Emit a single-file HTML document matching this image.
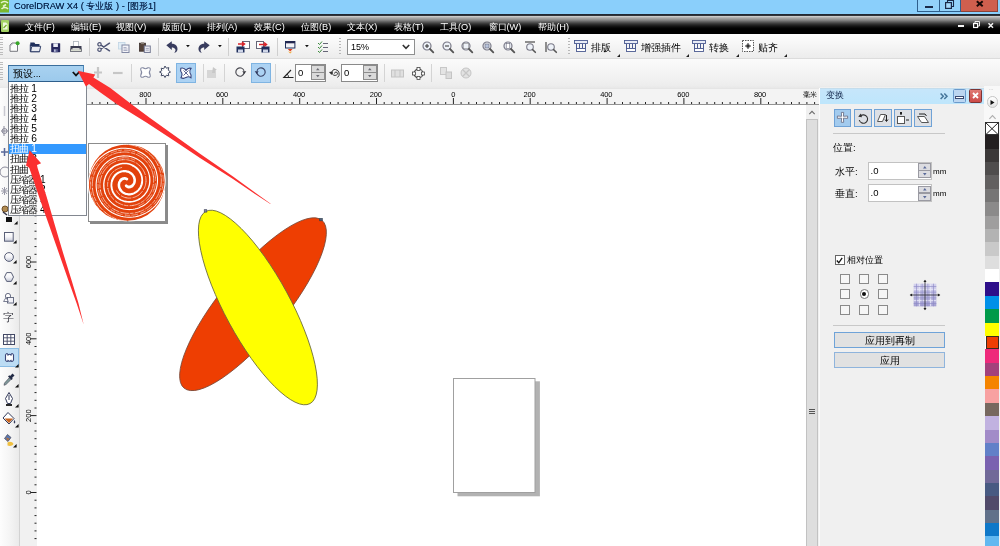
<!DOCTYPE html>
<html>
<head>
<meta charset="utf-8">
<title>CorelDRAW X4</title>
<style>
*{box-sizing:border-box;margin:0;padding:0}
html,body{width:1000px;height:546px;overflow:hidden;background:#fff}
body{position:relative;font-family:"Liberation Sans",sans-serif;font-size:9px;color:#000;-webkit-font-smoothing:antialiased}
.abs{will-change:transform}
.abs,.abs *{position:absolute}
i{display:block}
span{white-space:nowrap}
svg{overflow:visible}
#title{left:0;top:0;width:1000px;height:14px;background:#8acffb;overflow:hidden}
#title .t{left:14px;top:0;font-size:9.3px;line-height:13px;color:#07224a;text-shadow:0 0 .5px rgba(7,34,74,.7)}
#menu{left:0;top:13.5px;width:1000px;height:20.5px;background:linear-gradient(#232c3a 0,#1e2228 1.4px,#cecece 2.3px,#a8a8a8 4px,#888 6px,#5a5a5a 8px,#323232 10px,#161616 12px,#040404 14px,#000 15px,#000 100%)}
#menu span{top:6px;color:#fff;font-size:9.2px;line-height:14px}
#tb1{left:0;top:34px;width:1000px;height:25px;background:linear-gradient(#fefefe,#f4f4f4 55%,#ececec);border-bottom:1px solid #dcdcdc}
#tb2{left:0;top:59px;width:1000px;height:29px;background:linear-gradient(#fbfbfb,#f3f3f3 55%,#ededed 90%,#e8e8e8)}
.sep{width:1px;height:18px;top:4px;background:#cfcfcf}
.grip{width:3px;height:19px;top:3px;left:0;background:repeating-linear-gradient(#bdbdbd 0 1px,transparent 1px 2.5px)}
#hruler{left:19px;top:88px;width:799.5px;height:17px;background:linear-gradient(#dedede 0,#f3f3f3 1.5px,#f3f3f3 100%);border-bottom:1px solid #929292}
#toolbox{left:0;top:88px;width:19.5px;height:458px;background:linear-gradient(90deg,#fdfdfd,#f5f5f5 50%,#eaeaea);border-right:1px solid #d2d2d2}
#vruler{left:19.5px;top:105px;width:17.5px;height:441px;background:#f1f1f1;border-right:1px solid #9a9a9a}
#canvas{left:37px;top:105px;width:769px;height:441px;background:#fff}
#vscroll{left:805.5px;top:105px;width:15.5px;height:441px;background:#fafafa}
#docker{left:820px;top:87px;width:164px;height:459px;background:#f0f0f0}
#palette{left:984px;top:86px;width:16px;height:460px;background:#f0f0f0}
.lbl{font-size:9px;line-height:11px;color:#000}
</style>
</head>
<body>
<div id="title" class="abs"><span class="t">CorelDRAW X4 ( 专业版 ) - [图形1]</span><svg style="left:0px;top:0px" width="9" height="13" viewBox="0 0 9 13"><rect width="9" height="12.5" fill="#7ab82e"/><path d="M1 3c2-2 5-2 7 0M1.5 9c2-2 5-2 6.5 0M3 6.5l3-2" stroke="#e8f4d0" stroke-width="1.6" fill="none"/></svg><i style="left:916.5px;top:-1px;width:23.5px;height:13px;background:#93d2fa;border:1px solid #2f5f8c"></i><i style="left:925px;top:6px;width:8px;height:2.4px;background:#1a2a48"></i><i style="left:939px;top:-1px;width:21.5px;height:13px;background:#93d2fa;border:1px solid #2f5f8c"></i><svg style="left:944.5px;top:0px" width="9" height="9" viewBox="0 0 9 9"><path d="M2.5 2.5V.5h6v6h-2" fill="none" stroke="#1a2a48" stroke-width="1.1"/><rect x=".6" y="2.6" width="5.8" height="5.8" fill="#a8dafa" stroke="#1a2a48" stroke-width="1.2"/></svg><i style="left:960.5px;top:-1px;width:37.5px;height:13px;background:#cf5f4e;border:1px solid #8a4238;border-left:0"></i><svg style="left:976px;top:1px" width="7.5" height="5.6" viewBox="0 0 7.5 5.6"><path d="M.8 .3l5.9 5M6.7 .3l-5.9 5" stroke="#1a0a08" stroke-width="2"/></svg></div>
<div id="menu" class="abs"><span style="left:25px">文件(F)</span><span style="left:71px">编辑(E)</span><span style="left:116px">视图(V)</span><span style="left:162px">版面(L)</span><span style="left:207px">排列(A)</span><span style="left:254px">效果(C)</span><span style="left:301px">位图(B)</span><span style="left:347px">文本(X)</span><span style="left:394px">表格(T)</span><span style="left:440px">工具(O)</span><span style="left:488.5px">窗口(W)</span><span style="left:538.2px">帮助(H)</span><i style="left:958px;top:11px;width:6px;height:2px;background:#f4f4f4"></i><svg style="left:972.5px;top:6.5px" width="7" height="7" viewBox="0 0 7 7"><path d="M2 2V.5h4.5V5H5" fill="none" stroke="#eee" stroke-width="1"/><rect x=".6" y="2.5" width="4" height="4" fill="none" stroke="#fff" stroke-width="1.2"/></svg><svg style="left:987.5px;top:8.5px" width="5.5" height="5" viewBox="0 0 5.5 5"><path d="M.5 .3l4.5 4.4M5 .3L.5 4.7" stroke="#f4f4f4" stroke-width="1.5"/></svg><svg style="left:1px;top:5.5px" width="8" height="12" viewBox="0 0 8 12"><rect width="8" height="12" rx="1" fill="#a4d264"/><path d="M2 2.5h3l1.5 1.5v5.5h-4.5z" fill="#eef8dc"/><path d="M2.5 8l3-3" stroke="#7ab030" stroke-width="1.2"/></svg></div>
<div id="tb1" class="abs"><i class="grip"></i><svg style="left:8.7px;top:8px" width="10" height="10" viewBox="0 0 10 10"><path d="M3 1h5.5v8.3h-7.5V3z" fill="#fcfcfc" stroke="#77797f" stroke-width="1"/><path d="M1 3h2V1" fill="none" stroke="#9a9ca4" stroke-width=".7"/><circle cx="8.6" cy="1.3" r="2" fill="#37a628"/></svg><svg style="left:29.799999999999997px;top:7.699999999999999px" width="11" height="10" viewBox="0 0 11 10"><path d="M.3 .6h4l1 1.3h4.2v2h-9.2z" fill="#1f2f5c"/><path d="M.3 2.5v7.2h9.3" fill="none" stroke="#1f2f5c" stroke-width="1"/><path d="M1.8 4.3h8.9l-1.2 5.4h-8.9z" fill="#e9ebf1" stroke="#1f2f5c" stroke-width=".9"/></svg><svg style="left:50.8px;top:8.5px" width="9.4" height="9.4" viewBox="0 0 9.4 9.4"><rect x=".2" y=".2" width="9" height="9" rx=".6" fill="#27285e"/><rect x="2.3" y=".4" width="4.6" height="3.6" fill="#eceef8"/><rect x="2.6" y="6" width="4.2" height="3.2" fill="#5a5e90"/><rect x="3.2" y="6.5" width="1.3" height="2.2" fill="#d8dcf0"/></svg><svg style="left:70.2px;top:7.300000000000001px" width="12" height="11" viewBox="0 0 12 11"><rect x="3.5" y=".5" width="5" height="5" fill="#fff" stroke="#a8b0b8" stroke-width=".8"/><rect x=".5" y="5" width="11" height="3.2" fill="#3a3c50"/><rect x=".5" y="8" width="11" height="2.5" fill="#d8dcd0" stroke="#5a5c68" stroke-width=".8"/><rect x="2.5" y="7.2" width="7" height="1.3" fill="#f8f8f0"/></svg><i style="left:89px;top:4px;width:1px;height:18px;background:#cfcfcf"></i><svg style="left:96.8px;top:7.699999999999999px" width="13" height="10" viewBox="0 0 13 10"><path d="M4 3.2L12.5 8.8M4 6.8L12.5 1.2" stroke="#4e5474" stroke-width="1.5" fill="none" stroke-linecap="round"/><circle cx="2.5" cy="2.3" r="1.7" fill="#f4f4f4" stroke="#4e5474" stroke-width="1.2"/><circle cx="2.5" cy="7.7" r="1.7" fill="#f4f4f4" stroke="#4e5474" stroke-width="1.2"/></svg><svg style="left:118.2px;top:7.699999999999999px" width="12" height="11" viewBox="0 0 12 11"><rect x=".5" y=".5" width="6.5" height="6.5" fill="#e2eef6" stroke="#c0d4e4" stroke-width=".8"/><rect x="4" y="3" width="7" height="7.5" fill="#f4f4f8" stroke="#8289a4" stroke-width="1"/><path d="M5.5 5.5h3M5.5 7h4M5.5 8.5h4" stroke="#9aa0b8" stroke-width=".8"/></svg><svg style="left:138.5px;top:7.699999999999999px" width="12" height="11" viewBox="0 0 12 11"><rect x=".5" y="1.2" width="6" height="8" fill="#54433a" stroke="#3a2e2a" stroke-width=".8"/><rect x="2" y=".3" width="3" height="1.8" fill="#8a8078"/><rect x="5.3" y="4" width="6" height="6.5" fill="#e8e8ee" stroke="#7a7f98" stroke-width="1"/><path d="M6.8 6.5h3M6.8 8.2h3" stroke="#9aa0b8" stroke-width=".8"/></svg><i style="left:157.5px;top:4px;width:1px;height:18px;background:#cfcfcf"></i><svg style="left:166px;top:6.699999999999999px" width="12" height="12" viewBox="0 0 12 12"><path d="M.3 4.2L5.8 .3v2.5c3.8 0 6.2 2.6 5.6 6.2c-.4 1.6-1.6 2.6-3.2 2.8c1.3-1.2 1.6-2.5 1-3.7c-.6-1.2-1.8-1.7-3.4-1.7v2.6z" fill="#383c5e"/></svg><svg style="left:185.79999999999998px;top:11.3px" width="3.8" height="2.2" viewBox="0 0 3.8 2.2"><path d="M0 0h3.8L1.9 2.2z" fill="#111"/></svg><svg style="left:198px;top:6.699999999999999px" width="12" height="12" viewBox="0 0 12 12"><g transform="translate(12,0) scale(-1,1)"><path d="M.3 4.2L5.8 .3v2.5c3.8 0 6.2 2.6 5.6 6.2c-.4 1.6-1.6 2.6-3.2 2.8c1.3-1.2 1.6-2.5 1-3.7c-.6-1.2-1.8-1.7-3.4-1.7v2.6z" fill="#383c5e"/></g></svg><svg style="left:217.9px;top:11.3px" width="3.8" height="2.2" viewBox="0 0 3.8 2.2"><path d="M0 0h3.8L1.9 2.2z" fill="#111"/></svg><i style="left:228px;top:4px;width:1px;height:18px;background:#cfcfcf"></i><svg style="left:236px;top:7px" width="14" height="12" viewBox="0 0 14 12"><rect x="6.5" y="0.5" width="7" height="7" fill="#fff" stroke="#667"/><path d="M2 3h6M6 1l2.5 2L6 5" stroke="#d8242a" stroke-width="1.5" fill="none"/><rect x="0.5" y="5.5" width="8" height="6" fill="#1f2f5c"/><rect x="2" y="8.5" width="5" height="3" fill="#cfd6e8"/></svg><svg style="left:256.4px;top:7px" width="14" height="12" viewBox="0 0 14 12"><rect x="0.5" y="0.5" width="7" height="7" fill="#fff" stroke="#667"/><path d="M3 3.5h7M8 1.5l2.5 2L8 5.5" stroke="#d8242a" stroke-width="1.5" fill="none"/><rect x="5.5" y="5.5" width="8" height="6" fill="#1f2f5c"/><rect x="7" y="8.5" width="5" height="3" fill="#cfd6e8"/></svg><i style="left:277px;top:4px;width:1px;height:18px;background:#cfcfcf"></i><svg style="left:285px;top:6.5px" width="10.4" height="13" viewBox="0 0 10.4 13"><rect x=".5" y=".5" width="9.4" height="6.5" fill="#f2f2f6" stroke="#1f2f5c" stroke-width="1"/><rect x=".5" y=".3" width="9.4" height="2" fill="#23264e"/><path d="M2.8 8h4.8l-2.4 2.6z" fill="#e03c18"/><path d="M3 10.3l2.2 2.2 2.2-2.2-2.2 .9z" fill="#f3a427"/></svg><svg style="left:304.70000000000005px;top:11.3px" width="3.8" height="2.2" viewBox="0 0 3.8 2.2"><path d="M0 0h3.8L1.9 2.2z" fill="#111"/></svg><svg style="left:317.2px;top:7px" width="12" height="12" viewBox="0 0 12 12"><path d="M1 2l1.5 1.5L5 .5M1 6l1.5 1.5L5 4.5M1 10l1.5 1.5L5 8.5" stroke="#3c8a3c" stroke-width="1" fill="none"/><path d="M6 2.5h5M6 6.5h5M6 10.5h5" stroke="#667" stroke-width="1.2"/></svg><i style="left:339px;top:4px;width:2px;height:18px;background:repeating-linear-gradient(#b8b8b8 0 1px,transparent 1px 3px)"></i><i style="left:347px;top:4.5px;width:68px;height:16.5px;background:#fff;border:1px solid #8e8f8f"></i><span style="left:351px;top:8px;font-size:9px;line-height:10px">15%</span><svg style="left:402px;top:10px" width="8" height="6" viewBox="0 0 8 6"><path d="M0.8 1l3.2 3.4L7.2 1" stroke="#333" stroke-width="1.6" fill="none"/></svg><svg style="left:422px;top:6.5px" width="12" height="12" viewBox="0 0 12 12"><circle cx="5" cy="5" r="4" fill="#eef2f8" stroke="#7a7a88" stroke-width="1.2"/><path d="M3 5h4M5 3v4" stroke="#333" stroke-width="1"/><path d="M8 8l3.3 3.3" stroke="#555" stroke-width="1.8" stroke-linecap="round"/></svg><svg style="left:442px;top:6.5px" width="12" height="12" viewBox="0 0 12 12"><circle cx="5" cy="5" r="4" fill="#eef2f8" stroke="#7a7a88" stroke-width="1.2"/><path d="M3 5h4" stroke="#333" stroke-width="1"/><path d="M8 8l3.3 3.3" stroke="#555" stroke-width="1.8" stroke-linecap="round"/></svg><svg style="left:461px;top:6.5px" width="12" height="12" viewBox="0 0 12 12"><circle cx="5" cy="5" r="4" fill="#eef2f8" stroke="#7a7a88" stroke-width="1.2"/><rect x="2.5" y="2.5" width="5" height="5" fill="none" stroke="#555" stroke-width=".8" stroke-dasharray="1 1"/><path d="M8 8l3.3 3.3" stroke="#555" stroke-width="1.8" stroke-linecap="round"/></svg><svg style="left:482px;top:6.5px" width="12" height="12" viewBox="0 0 12 12"><circle cx="5" cy="5" r="4" fill="#eef2f8" stroke="#7a7a88" stroke-width="1.2"/><rect x="3" y="3" width="4" height="4" fill="#b8c4dc" stroke="#667" stroke-width=".6"/><path d="M8 8l3.3 3.3" stroke="#555" stroke-width="1.8" stroke-linecap="round"/></svg><svg style="left:503px;top:6.5px" width="12" height="12" viewBox="0 0 12 12"><circle cx="5" cy="5" r="4" fill="#eef2f8" stroke="#7a7a88" stroke-width="1.2"/><rect x="3.2" y="2.5" width="3.6" height="5" fill="#fff" stroke="#667" stroke-width=".6"/><path d="M8 8l3.3 3.3" stroke="#555" stroke-width="1.8" stroke-linecap="round"/></svg><svg style="left:524px;top:7px" width="12" height="12" viewBox="0 0 12 12"><path d="M1 1h10" stroke="#555" stroke-width="1.3"/><circle cx="6" cy="6" r="3.3" fill="#eef2f8" stroke="#7a7a88" stroke-width="1.1"/><path d="M8.5 8.5l2.8 2.8" stroke="#555" stroke-width="1.6" stroke-linecap="round"/></svg><svg style="left:544.5px;top:7px" width="12" height="12" viewBox="0 0 12 12"><path d="M1 1v10" stroke="#555" stroke-width="1.3"/><circle cx="6" cy="6" r="3.3" fill="#eef2f8" stroke="#7a7a88" stroke-width="1.1"/><path d="M8.5 8.5l2.8 2.8" stroke="#555" stroke-width="1.6" stroke-linecap="round"/></svg><i style="left:568px;top:4px;width:2px;height:18px;background:repeating-linear-gradient(#b8b8b8 0 1px,transparent 1px 3px)"></i><svg style="left:574px;top:6px" width="14" height="12" viewBox="0 0 14 12"><rect x="0.5" y="0.5" width="13" height="3" fill="#e8ecf6" stroke="#4a5a90" stroke-width=".9"/><path d="M2.5 4v5h9V4M5.5 4v4.5M8.5 4v4.5" stroke="#4a5a90" stroke-width="1" fill="none"/><rect x="2.5" y="8.5" width="9" height="3" fill="#fff" stroke="#4a5a90" stroke-width=".9"/></svg><span style="left:591px;top:7.5px;font-size:9.5px;line-height:12px">排版</span><svg style="left:617px;top:20px" width="3" height="3" viewBox="0 0 3 3"><path d="M3 0v3H0z" fill="#222"/></svg><svg style="left:623.5px;top:6px" width="14" height="12" viewBox="0 0 14 12"><rect x="0.5" y="0.5" width="13" height="3" fill="#e8ecf6" stroke="#4a5a90" stroke-width=".9"/><path d="M2.5 4v5h9V4M5.5 4v4.5M8.5 4v4.5" stroke="#4a5a90" stroke-width="1" fill="none"/><rect x="2.5" y="8.5" width="9" height="3" fill="#fff" stroke="#4a5a90" stroke-width=".9"/></svg><span style="left:641px;top:7.5px;font-size:9.5px;line-height:12px;">增强插件</span><svg style="left:686px;top:20px" width="3" height="3" viewBox="0 0 3 3"><path d="M3 0v3H0z" fill="#222"/></svg><svg style="left:692px;top:6px" width="14" height="12" viewBox="0 0 14 12"><rect x="0.5" y="0.5" width="13" height="3" fill="#e8ecf6" stroke="#4a5a90" stroke-width=".9"/><path d="M2.5 4v5h9V4M5.5 4v4.5M8.5 4v4.5" stroke="#4a5a90" stroke-width="1" fill="none"/><rect x="2.5" y="8.5" width="9" height="3" fill="#fff" stroke="#4a5a90" stroke-width=".9"/></svg><span style="left:709px;top:7.5px;font-size:9.5px;line-height:12px">转换</span><svg style="left:735.5px;top:20px" width="3" height="3" viewBox="0 0 3 3"><path d="M3 0v3H0z" fill="#222"/></svg><svg style="left:742px;top:6px" width="12" height="12" viewBox="0 0 12 12"><rect x="0.5" y="0.5" width="11" height="11" fill="#fff" stroke="#555" stroke-dasharray="1.5 1"/><path d="M3 6h6M6 3v6" stroke="#333" stroke-width="1"/><rect x="4.5" y="4.5" width="3" height="3" fill="#333"/></svg><span style="left:757.5px;top:7.5px;font-size:9.5px;line-height:12px">贴齐</span><svg style="left:784px;top:20px" width="3" height="3" viewBox="0 0 3 3"><path d="M3 0v3H0z" fill="#222"/></svg></div>
<div id="tb2" class="abs"><i class="grip"></i><i style="left:8px;top:5.8px;width:75.7px;height:17.2px;background:linear-gradient(#a8d1f0,#9ccaec);border:1px solid #4a86b8;border-top-color:#3a6e9c;border-bottom:1.5px solid #2e5f8c"></i><span style="left:13px;top:9px;font-size:9.5px;line-height:11px">预设...</span><svg style="left:72px;top:12px" width="8" height="6" viewBox="0 0 8 6"><path d="M0.8 1l3.2 3.4L7.2 1" stroke="#111" stroke-width="1.8" fill="none"/></svg><svg style="left:93.5px;top:8px" width="8" height="11" viewBox="0 0 8 11"><path d="M4 0v11M0 5.5h8" stroke="#c6c6c6" stroke-width="2.2"/></svg><svg style="left:112.6px;top:8.6px" width="9.6" height="10" viewBox="0 0 9.6 10"><path d="M0 5h9.6" stroke="#c6c6c6" stroke-width="2.2"/></svg><i style="left:131px;top:5px;width:1px;height:18px;background:#d4d4d4"></i><svg style="left:139.5px;top:7.5px" width="11" height="11" viewBox="0 0 11 11"><path d="M3 .8Q5.5 2.6 8 .8Q10.8 .2 10.2 3Q8.4 5.5 10.2 8Q10.8 10.8 8 10.2Q5.5 8.4 3 10.2Q.2 10.8 .8 8Q2.6 5.5 .8 3Q.2 .2 3 .8z" fill="#fff" stroke="#858aa2" stroke-width="1.1"/></svg><svg style="left:159.2px;top:7.4px" width="12" height="12" viewBox="0 0 12 12"><path d="M6 0l1.3 2.2 2.5-.6-.6 2.5L11.5 6 9.2 7.3l.6 2.5-2.5-.6L6 11.5 4.7 9.2l-2.5.6.6-2.5L.5 6l2.3-1.3-.6-2.5 2.5.6z" fill="#fff" stroke="#444c66" stroke-width="1"/></svg><i style="left:176px;top:3.5px;width:20px;height:20px;background:#acd2f3;border:1px solid #7fb4e2"></i><svg style="left:179.8px;top:7.5px" width="12" height="12" viewBox="0 0 12 12"><path d="M.8 1.2C3 .6 4.8 1.5 6 3.4C7.2 1.6 9 .8 11 1.3C9.6 2.8 9.4 4.4 10 6C11.2 7.4 11.6 9 11 10.8C9.4 9.6 7.6 9.6 6 10.4C4.6 11.4 2.8 11.6 1 10.8C2.2 9.2 2.4 7.6 1.8 6C.6 4.6 .3 2.9 .8 1.2z" fill="#fff" stroke="#36427a" stroke-width="1.1"/><path d="M3.5 3.5l5 5M8.5 3.5l-5 5" stroke="#36427a" stroke-width=".8"/></svg><i style="left:203px;top:5px;width:1px;height:18px;background:#d4d4d4"></i><svg style="left:206px;top:8px" width="12" height="12" viewBox="0 0 12 12"><rect x="1" y="3" width="9" height="8" fill="#d6d6d6"/><path d="M7 0l4 3h-2v3H6z" fill="#c8c8c8"/></svg><i style="left:224px;top:5px;width:1px;height:18px;background:#d4d4d4"></i><svg style="left:234.3px;top:7.2px" width="12" height="12" viewBox="0 0 12 12"><path d="M10 4.7A4.2 4.2 0 1 0 10.1 7" fill="none" stroke="#4a4a52" stroke-width="1.15"/><path d="M8.3 5.2h4l-2 2.7z" fill="#33333a"/></svg><i style="left:251px;top:3.5px;width:20px;height:20px;background:#acd2f3;border:1px solid #7fb4e2"></i><svg style="left:255px;top:7.2px" width="12" height="12" viewBox="0 0 12 12"><g transform="translate(12,0) scale(-1,1)"><path d="M10 4.7A4.2 4.2 0 1 0 10.1 7" fill="none" stroke="#3a4468" stroke-width="1.15"/><path d="M8.3 5.2h4l-2 2.7z" fill="#2b3358"/></g></svg><i style="left:275px;top:5px;width:1px;height:18px;background:#d4d4d4"></i><svg style="left:283px;top:10px" width="11" height="9" viewBox="0 0 11 9"><path d="M10.5 8.5H.8L8 1" fill="none" stroke="#222" stroke-width="1.1"/><path d="M5.5 8.5A4 4 0 0 0 4 5" fill="none" stroke="#222" stroke-width=".9"/></svg><i style="left:295px;top:5px;width:31px;height:17.5px;background:#fff;border:1px solid #8a8a8a"></i><span style="left:298px;top:8px;font-size:9.5px;line-height:11px">0</span><i style="left:311px;top:6px;width:14px;height:7.8px;background:#dadada;border:1px solid #8c8c8c"></i><i style="left:311px;top:13.2px;width:14px;height:7.8px;background:#dadada;border:1px solid #8c8c8c"></i><svg style="left:316.2px;top:8.6px" width="3.6" height="2.2" viewBox="0 0 3.6 2.2"><path d="M0 2.2h3.6L1.8 0z" fill="#6a6a72"/></svg><svg style="left:316.2px;top:16px" width="3.6" height="2.2" viewBox="0 0 3.6 2.2"><path d="M0 0h3.6L1.8 2.2z" fill="#6a6a72"/></svg><svg style="left:329px;top:9px" width="11" height="11" viewBox="0 0 11 11"><path d="M5.5 5.5a1.5 1.5 0 1 1 2 1.5a3 3 0 1 1 -1-5.5a4.5 4.5 0 0 1 2 8" fill="none" stroke="#333" stroke-width="1"/><path d="M0 4l2.5 3 1.5-3.5z" fill="#333"/></svg><i style="left:341px;top:5px;width:37px;height:17.5px;background:#fff;border:1px solid #8a8a8a"></i><span style="left:344px;top:8px;font-size:9.5px;line-height:11px">0</span><i style="left:363px;top:6px;width:14px;height:7.8px;background:#dadada;border:1px solid #8c8c8c"></i><i style="left:363px;top:13.2px;width:14px;height:7.8px;background:#dadada;border:1px solid #8c8c8c"></i><svg style="left:368.2px;top:8.6px" width="3.6" height="2.2" viewBox="0 0 3.6 2.2"><path d="M0 2.2h3.6L1.8 0z" fill="#6a6a72"/></svg><svg style="left:368.2px;top:16px" width="3.6" height="2.2" viewBox="0 0 3.6 2.2"><path d="M0 0h3.6L1.8 2.2z" fill="#6a6a72"/></svg><i style="left:384px;top:5px;width:1px;height:18px;background:#d4d4d4"></i><svg style="left:391px;top:9px" width="13" height="10" viewBox="0 0 13 10"><rect x="0.5" y="2" width="12" height="7" fill="#e0e0e0" stroke="#c4c4c4"/><path d="M4 2v7M9 2v7" stroke="#c4c4c4"/></svg><svg style="left:412.3px;top:7.5px" width="13" height="13" viewBox="0 0 13 13"><circle cx="6.5" cy="6.5" r="4.5" fill="none" stroke="#444" stroke-width="1.1"/><rect x="5" y="0.5" width="3" height="3" fill="#fff" stroke="#444" stroke-width=".8"/><rect x="5" y="9.5" width="3" height="3" fill="#fff" stroke="#444" stroke-width=".8"/><rect x="0.5" y="5" width="3" height="3" fill="#fff" stroke="#444" stroke-width=".8"/><rect x="9.5" y="5" width="3" height="3" fill="#fff" stroke="#444" stroke-width=".8"/></svg><i style="left:431px;top:5px;width:1px;height:18px;background:#d4d4d4"></i><svg style="left:439.7px;top:8px" width="12" height="12" viewBox="0 0 12 12"><rect x="0.5" y="0.5" width="6" height="7" fill="#e4e4e4" stroke="#c8c8c8"/><rect x="6" y="5" width="5.5" height="6.5" fill="#dcdcdc" stroke="#c4c4c4"/></svg><svg style="left:460px;top:8px" width="12" height="12" viewBox="0 0 12 12"><circle cx="6" cy="6" r="5" fill="#e2e2e2" stroke="#c6c6c6"/><path d="M2.5 2.5l7 7M9.5 2.5l-7 7" stroke="#c6c6c6" stroke-width="1.2"/></svg></div>
<div id="hruler" class="abs"><svg style="left:0px;top:0px" width="801" height="17" viewBox="0 0 801 17"><path d="M19.4 16v-2M27.1 16v-2M34.8 16v-2M42.5 16v-2M50.1 16v-6M57.8 16v-2M65.5 16v-2M73.2 16v-2M80.9 16v-2M88.6 16v-2M96.3 16v-2M103.9 16v-2M111.6 16v-2M119.3 16v-2M127 16v-6M134.7 16v-2M142.4 16v-2M150.1 16v-2M157.7 16v-2M165.4 16v-2M173.1 16v-2M180.8 16v-2M188.5 16v-2M196.2 16v-2M203.8 16v-6M211.5 16v-2M219.2 16v-2M226.9 16v-2M234.6 16v-2M242.3 16v-2M250 16v-2M257.6 16v-2M265.3 16v-2M273 16v-2M280.7 16v-6M288.4 16v-2M296.1 16v-2M303.8 16v-2M311.4 16v-2M319.1 16v-2M326.8 16v-2M334.5 16v-2M342.2 16v-2M349.9 16v-2M357.5 16v-6M365.2 16v-2M372.9 16v-2M380.6 16v-2M388.3 16v-2M396 16v-2M403.7 16v-2M411.3 16v-2M419 16v-2M426.7 16v-2M434.4 16v-6M442.1 16v-2M449.8 16v-2M457.5 16v-2M465.1 16v-2M472.8 16v-2M480.5 16v-2M488.2 16v-2M495.9 16v-2M503.6 16v-2M511.2 16v-6M518.9 16v-2M526.6 16v-2M534.3 16v-2M542 16v-2M549.7 16v-2M557.4 16v-2M565 16v-2M572.7 16v-2M580.4 16v-2M588.1 16v-6M595.8 16v-2M603.5 16v-2M611.2 16v-2M618.8 16v-2M626.5 16v-2M634.2 16v-2M641.9 16v-2M649.6 16v-2M657.3 16v-2M664.9 16v-6M672.6 16v-2M680.3 16v-2M688 16v-2M695.7 16v-2M703.4 16v-2M711.1 16v-2M718.7 16v-2M726.4 16v-2M734.1 16v-2M741.8 16v-6M749.5 16v-2M757.2 16v-2M764.9 16v-2M772.5 16v-2M780.2 16v-2M787.9 16v-2M795.6 16v-2" stroke="#222" stroke-width="1" fill="none"/></svg><span style="left:120.25px;top:2.5px;font-size:7.5px;line-height:8px;letter-spacing:-.2px">800</span><span style="left:197.05px;top:2.5px;font-size:7.5px;line-height:8px;letter-spacing:-.2px">600</span><span style="left:273.95px;top:2.5px;font-size:7.5px;line-height:8px;letter-spacing:-.2px">400</span><span style="left:350.75px;top:2.5px;font-size:7.5px;line-height:8px;letter-spacing:-.2px">200</span><span style="left:432.15px;top:2.5px;font-size:7.5px;line-height:8px;letter-spacing:-.2px">0</span><span style="left:504.45000000000005px;top:2.5px;font-size:7.5px;line-height:8px;letter-spacing:-.2px">200</span><span style="left:581.35px;top:2.5px;font-size:7.5px;line-height:8px;letter-spacing:-.2px">400</span><span style="left:658.25px;top:2.5px;font-size:7.5px;line-height:8px;letter-spacing:-.2px">600</span><span style="left:735.05px;top:2.5px;font-size:7.5px;line-height:8px;letter-spacing:-.2px">800</span></div>
<div class="abs" style="left:0;top:0"><span style="left:802.5px;top:90.5px;font-size:6.6px;line-height:8px;color:#000">毫米</span></div>
<div id="toolbox" class="abs"><svg style="left:2px;top:18px" width="5" height="10" viewBox="0 0 5 10"><path d="M2.5 0v10" stroke="#c8c8d0" stroke-width="1.5"/></svg><svg style="left:1px;top:38px" width="7" height="10" viewBox="0 0 7 10"><path d="M3 0v10M0 5h7" stroke="#8a8a9a" stroke-width="1"/><circle cx="3.5" cy="5" r="2.5" fill="none" stroke="#8a8a9a"/></svg><svg style="left:1px;top:59px" width="7" height="10" viewBox="0 0 7 10"><path d="M0 5h7M3.5 1v8" stroke="#5a6a9a" stroke-width="1.5"/></svg><svg style="left:0px;top:78px" width="7" height="12" viewBox="0 0 7 12"><circle cx="5" cy="6" r="5" fill="#f8f8f8" stroke="#8a8a9a"/></svg><svg style="left:1px;top:98px" width="7" height="10" viewBox="0 0 7 10"><path d="M0 5h7M3.5 1v8M1 2l5 6M6 2l-5 6" stroke="#9a9aa8" stroke-width="1"/></svg><svg style="left:1px;top:117px" width="8" height="10" viewBox="0 0 8 10"><circle cx="4" cy="4" r="3" fill="#b08a50" stroke="#705028"/><path d="M2 7l4 3" stroke="#334" stroke-width="1.5"/></svg><i style="left:6px;top:129px;width:6px;height:5px;background:#111"></i><svg style="left:13.7px;top:132.7px" width="3.6" height="3.6" viewBox="0 0 3.6 3.6"><path d="M3.6 0v3.6H0z" fill="#111"/></svg><svg style="left:4px;top:144px" width="10" height="10" viewBox="0 0 10 10"><defs><linearGradient id="gr" x1="0" y1="0" x2="0" y2="1"><stop offset="0" stop-color="#fff"/><stop offset=".5" stop-color="#f4f4f8"/><stop offset="1" stop-color="#c4c8d6"/></linearGradient></defs><rect x="0.5" y="0.5" width="8.7" height="8.7" fill="url(#gr)" stroke="#5a6078" stroke-width="1"/></svg><svg style="left:13.2px;top:152.2px" width="3.6" height="3.6" viewBox="0 0 3.6 3.6"><path d="M3.6 0v3.6H0z" fill="#111"/></svg><svg style="left:3.8px;top:164.3px" width="10" height="10" viewBox="0 0 10 10"><circle cx="5" cy="5" r="4.4" fill="url(#gr)" stroke="#5a6078" stroke-width="1"/></svg><svg style="left:13.2px;top:172.39999999999998px" width="3.6" height="3.6" viewBox="0 0 3.6 3.6"><path d="M3.6 0v3.6H0z" fill="#111"/></svg><svg style="left:3.8px;top:184.39999999999998px" width="10" height="10" viewBox="0 0 10 10"><path d="M2.7 .6h4.6L9.5 5 7.3 9.4H2.7L.5 5z" fill="url(#gr)" stroke="#5a6078" stroke-width="1"/></svg><svg style="left:13.2px;top:192.7px" width="3.6" height="3.6" viewBox="0 0 3.6 3.6"><path d="M3.6 0v3.6H0z" fill="#111"/></svg><svg style="left:3.3px;top:204.60000000000002px" width="11" height="11" viewBox="0 0 11 11"><circle cx="5" cy="3" r="2.6" fill="#fff" stroke="#5a6078" stroke-width=".9"/><rect x="4.5" y="4.5" width="6" height="5.5" fill="#f2f2f8" stroke="#5a6078" stroke-width=".9"/><path d="M.6 8.5l2.4-4 2.4 4z" fill="#fff" stroke="#5a6078" stroke-width=".8"/></svg><svg style="left:13.2px;top:213.7px" width="3.6" height="3.6" viewBox="0 0 3.6 3.6"><path d="M3.6 0v3.6H0z" fill="#111"/></svg><span style="left:3.3px;top:223.5px;font-size:10.5px;line-height:11px;color:#3a3a44">字</span><svg style="left:2.7px;top:245.5px" width="12" height="11" viewBox="0 0 12 11"><rect x="0.5" y="0.5" width="11" height="10" fill="#fff" stroke="#444a66"/><path d="M0.5 3.8h11M0.5 7.2h11M4.2 0.5v10M7.8 0.5v10" stroke="#444a66" stroke-width=".9"/></svg><i style="left:0px;top:260px;width:19px;height:19px;background:#bcdcf4;border:1px solid #8abce4;border-left:0"></i><svg style="left:4px;top:264px" width="11" height="11" viewBox="0 0 11 11"><path d="M1.5 3c1-2 2-2 2.5 0c1-1 2-1 3 0c.5-2 1.5-2 2.5 0v5c-1 2-2 2-2.5 .5c-1 1-2 1-3 0c-.5 1.5-1.5 1.5-2.5-.5z" fill="#fff" stroke="#3a4678" stroke-width="1.1"/></svg><svg style="left:14.7px;top:275.7px" width="3.6" height="3.6" viewBox="0 0 3.6 3.6"><path d="M3.6 0v3.6H0z" fill="#111"/></svg><svg style="left:3px;top:285px" width="12" height="13" viewBox="0 0 12 13"><path d="M9.5 .5l2 2-2.5 2.5.8.8-1.3 1.3-3.5-3.5 1.3-1.3.8.8z" fill="#222a44"/><path d="M6 5l1.8 1.8L3 11.5l-2 .8.5-2.2z" fill="#7f9a9a" stroke="#445" stroke-width=".6"/></svg><svg style="left:14.7px;top:295.7px" width="3.6" height="3.6" viewBox="0 0 3.6 3.6"><path d="M3.6 0v3.6H0z" fill="#111"/></svg><svg style="left:4px;top:304px" width="10" height="14" viewBox="0 0 10 14"><path d="M5 0.5l3.5 6-2 5h-3l-2-5z" fill="#fff" stroke="#333a5a" stroke-width="1"/><path d="M5 3v5" stroke="#333a5a"/><path d="M2 13h6" stroke="#111" stroke-width="1.8"/></svg><svg style="left:14.7px;top:315.7px" width="3.6" height="3.6" viewBox="0 0 3.6 3.6"><path d="M3.6 0v3.6H0z" fill="#111"/></svg><svg style="left:2px;top:324px" width="14" height="13" viewBox="0 0 14 13"><path d="M6 .5l6 6-5 5.5-6-6z" fill="#fff" stroke="#333a5a"/><path d="M2.5 6.5h8.5l-4 4.5z" fill="#c8641e"/><path d="M12.5 8c1 1.5 1 3 0 3.5c-1-.5-1-2 0-3.5z" fill="#333a5a"/></svg><svg style="left:14.7px;top:335.7px" width="3.6" height="3.6" viewBox="0 0 3.6 3.6"><path d="M3.6 0v3.6H0z" fill="#111"/></svg><svg style="left:3px;top:345.5px" width="13" height="14" viewBox="0 0 13 14"><path d="M4.5 .5l3.5 3-3 4-3.5-3z" fill="#5a78b0" stroke="#445" stroke-width=".7"/><path d="M3 3.5l3.5 1-2 2.5z" fill="#b07040"/><path d="M4.5 8.5c2-1.5 5-1 6 1.5c-1 2-4 2.5-6 1.5z" fill="#f0c040"/></svg><svg style="left:13px;top:356.2px" width="3.6" height="3.6" viewBox="0 0 3.6 3.6"><path d="M3.6 0v3.6H0z" fill="#111"/></svg></div>
<div id="vruler" class="abs"><svg style="left:0px;top:0px" width="17.5" height="441" viewBox="0 0 17.5 441"><path d="M16.5 433.6h-2M16.5 425.9h-2M16.5 418.2h-2M16.5 410.6h-2M16.5 402.9h-2M16.5 395.2h-2M16.5 387.5h-6M16.5 379.8h-2M16.5 372.1h-2M16.5 364.4h-2M16.5 356.8h-2M16.5 349.1h-2M16.5 341.4h-2M16.5 333.7h-2M16.5 326h-2M16.5 318.3h-2M16.5 310.6h-6M16.5 303h-2M16.5 295.3h-2M16.5 287.6h-2M16.5 279.9h-2M16.5 272.2h-2M16.5 264.5h-2M16.5 256.9h-2M16.5 249.2h-2M16.5 241.5h-2M16.5 233.8h-6M16.5 226.1h-2M16.5 218.4h-2M16.5 210.7h-2M16.5 203.1h-2M16.5 195.4h-2M16.5 187.7h-2M16.5 180h-2M16.5 172.3h-2M16.5 164.6h-2M16.5 157h-6M16.5 149.3h-2M16.5 141.6h-2M16.5 133.9h-2M16.5 126.2h-2M16.5 118.5h-2M16.5 110.8h-2M16.5 103.2h-2M16.5 95.5h-2M16.5 87.8h-2M16.5 80.1h-6M16.5 72.4h-2M16.5 64.7h-2M16.5 57h-2M16.5 49.4h-2M16.5 41.7h-2M16.5 34h-2M16.5 26.3h-2M16.5 18.6h-2M16.5 10.9h-2M16.5 3.2h-6" stroke="#222" stroke-width="1" fill="none"/></svg><svg style="left:0px;top:0px" width="18" height="441" viewBox="0 0 18 441"><text x="11.2" y="80.1" transform="rotate(-90 11.2 80.1)" text-anchor="middle" font-size="7.5" font-family="Liberation Sans, sans-serif" fill="#000">800</text><text x="11.2" y="157" transform="rotate(-90 11.2 157)" text-anchor="middle" font-size="7.5" font-family="Liberation Sans, sans-serif" fill="#000">600</text><text x="11.2" y="233.8" transform="rotate(-90 11.2 233.8)" text-anchor="middle" font-size="7.5" font-family="Liberation Sans, sans-serif" fill="#000">400</text><text x="11.2" y="310.7" transform="rotate(-90 11.2 310.7)" text-anchor="middle" font-size="7.5" font-family="Liberation Sans, sans-serif" fill="#000">200</text><text x="11.2" y="387.5" transform="rotate(-90 11.2 387.5)" text-anchor="middle" font-size="7.5" font-family="Liberation Sans, sans-serif" fill="#000">0</text></svg></div>
<div id="canvas" class="abs"></div>
<div id="vscroll" class="abs"><i style="left:0px;top:0px;width:13px;height:441px;background:#f0f0f0"></i><svg style="left:3.2px;top:5.8px" width="6" height="3.4" viewBox="0 0 6 3.4"><path d="M.3 3.2l2.7-2.8 2.7 2.8" fill="none" stroke="#6a6a6a" stroke-width="1.1"/></svg><i style="left:0.4px;top:13.8px;width:11.6px;height:428px;background:#dedede;border:1px solid #c2c2c2"></i><svg style="left:3px;top:304px" width="6" height="7" viewBox="0 0 6 7"><path d="M0 .5h6M0 2.5h6M0 4.5h6" stroke="#555" stroke-width="1"/></svg></div>
<div id="docker" class="abs"><i style="left:0px;top:1px;width:164px;height:16px;background:linear-gradient(#c4d8e4 0,#c6e6fb 1.5px,#bee6fc 100%)"></i><span style="left:6px;top:3.2px;font-size:9.2px;line-height:11px;color:#10244a">变换</span><svg style="left:120px;top:6px" width="8" height="6.4" viewBox="0 0 8 6.4"><path d="M.6 .4l2.7 2.8-2.7 2.8M4.3 .4l2.7 2.8-2.7 2.8" fill="none" stroke="#44759a" stroke-width="1.5"/></svg><i style="left:133px;top:2.2px;width:13.4px;height:13.4px;background:#bcd6f1;border:1px solid #6a9acc;border-radius:1.5px"></i><i style="left:135.4px;top:8.6px;width:8.4px;height:3.8px;background:#fff;border:1px solid #3a4a72"></i><i style="left:148.6px;top:2.2px;width:13.2px;height:13.4px;background:linear-gradient(#e07a74,#cc4a48);border:1px solid #7c3434;border-radius:1.5px"></i><svg style="left:151.7px;top:5.4px" width="7" height="7" viewBox="0 0 7 7"><path d="M1 1l5 5M6 1l-5 5" stroke="#fff" stroke-width="1.8"/></svg><i style="left:13.5px;top:22px;width:17.5px;height:17.5px;background:#a3cbee;border:1px solid #6fa2d6"></i><i style="left:34px;top:22px;width:17.5px;height:17.5px;background:#dde0e5;border:1px solid #6fa2d6"></i><i style="left:54px;top:22px;width:17.5px;height:17.5px;background:#dde0e5;border:1px solid #6fa2d6"></i><i style="left:74px;top:22px;width:17.5px;height:17.5px;background:#dde0e5;border:1px solid #6fa2d6"></i><i style="left:94px;top:22px;width:17.5px;height:17.5px;background:#dde0e5;border:1px solid #6fa2d6"></i><svg style="left:16.7px;top:25.2px" width="11" height="11" viewBox="0 0 11 11"><path d="M4.3 .4h2.4l-.3 3.9 4.2-.3v2.4l-4.2-.3.3 4.2h-2.4l.3-4.2-4.2 .3v-2.4l4.2 .3z" fill="#fff" stroke="#6c7088" stroke-width=".9" stroke-linejoin="round"/></svg><svg style="left:37.5px;top:25.5px" width="11" height="11" viewBox="0 0 11 11"><path d="M2.5 3A4.2 4.2 0 1 1 1.3 7" fill="none" stroke="#333" stroke-width="1.1"/><path d="M.2 3.8l3.8.5L2.8.6z" fill="#333"/></svg><svg style="left:57px;top:25px" width="12" height="12" viewBox="0 0 12 12"><path d="M.5 9.5l3-7h5l-3 7z" fill="#fff" stroke="#555"/><path d="M9.5 3v6M8 7.5l1.5 2 1.5-2" stroke="#222" stroke-width="1" fill="none"/></svg><svg style="left:77px;top:25px" width="12" height="12" viewBox="0 0 12 12"><rect x=".5" y="4.5" width="7" height="7" fill="#fff" stroke="#555"/><path d="M4 0v3M9 8h3" stroke="#222" stroke-width="1.2"/><rect x="3" y="0" width="2" height="2" fill="#222"/></svg><svg style="left:97px;top:25px" width="12" height="12" viewBox="0 0 12 12"><path d="M.5 4.5h7l4 6h-7z" fill="#fff" stroke="#555"/><path d="M2 2h6l1.5 2" stroke="#222" stroke-width="1" fill="none"/></svg><i style="left:13px;top:45.5px;width:112px;height:1px;background:#c8c8c8"></i><span style="left:13px;top:54.5px;font-size:9.5px;line-height:11px">位置:</span><span style="left:15px;top:78.5px;font-size:9.5px;line-height:11px">水平:</span><i style="left:47.5px;top:74.5px;width:64.5px;height:18px;background:#fff;border:1px solid #c2c2c2"></i><span style="left:50.5px;top:77.5px;font-size:9.5px;line-height:11px">.0</span><i style="left:98px;top:76px;width:13px;height:7.8px;background:#dcdce0;border:1px solid #9a9aa2"></i><i style="left:98px;top:83.3px;width:13px;height:7.8px;background:#dcdce0;border:1px solid #9a9aa2"></i><svg style="left:102.7px;top:78.7px" width="3.6" height="2.4" viewBox="0 0 3.6 2.4"><path d="M0 2.4h3.6L1.8 0z" fill="#5a6a9a"/></svg><svg style="left:102.7px;top:86.1px" width="3.6" height="2.4" viewBox="0 0 3.6 2.4"><path d="M0 0h3.6L1.8 2.4z" fill="#5a6a9a"/></svg><span style="left:113px;top:79.5px;font-size:8px;line-height:9px">mm</span><span style="left:15px;top:101px;font-size:9.5px;line-height:11px">垂直:</span><i style="left:47.5px;top:97px;width:64.5px;height:18px;background:#fff;border:1px solid #c2c2c2"></i><span style="left:50.5px;top:100px;font-size:9.5px;line-height:11px">.0</span><i style="left:98px;top:98.5px;width:13px;height:7.8px;background:#dcdce0;border:1px solid #9a9aa2"></i><i style="left:98px;top:105.8px;width:13px;height:7.8px;background:#dcdce0;border:1px solid #9a9aa2"></i><svg style="left:102.7px;top:101.2px" width="3.6" height="2.4" viewBox="0 0 3.6 2.4"><path d="M0 2.4h3.6L1.8 0z" fill="#5a6a9a"/></svg><svg style="left:102.7px;top:108.6px" width="3.6" height="2.4" viewBox="0 0 3.6 2.4"><path d="M0 0h3.6L1.8 2.4z" fill="#5a6a9a"/></svg><span style="left:113px;top:102px;font-size:8px;line-height:9px">mm</span><i style="left:14.5px;top:168px;width:10px;height:10px;background:#fff;border:1px solid #666"></i><svg style="left:16px;top:169.5px" width="7" height="7" viewBox="0 0 7 7"><path d="M.8 3.5l2 2.3L6.2.8" fill="none" stroke="#111" stroke-width="1.3"/></svg><span style="left:27px;top:168px;font-size:9.2px;line-height:11px">相对位置</span><i style="left:20.3px;top:186.7px;width:10px;height:10px;background:#f6f6f6;border:1px solid #8a8a8a"></i><i style="left:39.3px;top:186.7px;width:10px;height:10px;background:#f6f6f6;border:1px solid #8a8a8a"></i><i style="left:58px;top:186.7px;width:10px;height:10px;background:#f6f6f6;border:1px solid #8a8a8a"></i><i style="left:20.3px;top:202px;width:10px;height:10px;background:#f6f6f6;border:1px solid #8a8a8a"></i><i style="left:39.599999999999994px;top:202.3px;width:9.4px;height:9.4px;background:#fff;border:1px solid #777;border-radius:50%"></i><i style="left:42.3px;top:205px;width:4px;height:4px;background:#111;border-radius:50%"></i><i style="left:58px;top:202px;width:10px;height:10px;background:#f6f6f6;border:1px solid #8a8a8a"></i><i style="left:20.3px;top:218px;width:10px;height:10px;background:#f6f6f6;border:1px solid #8a8a8a"></i><i style="left:39.3px;top:218px;width:10px;height:10px;background:#f6f6f6;border:1px solid #8a8a8a"></i><i style="left:58px;top:218px;width:10px;height:10px;background:#f6f6f6;border:1px solid #8a8a8a"></i><svg style="left:87.60000000000002px;top:191.10000000000002px" width="34" height="34" viewBox="0 0 24 24"><defs><linearGradient id="pg" x1="0" y1="0" x2="0" y2="1"><stop offset="0" stop-color="#d4d2ee"/><stop offset="1" stop-color="#a4a0d2"/></linearGradient></defs><rect x="4" y="4" width="16" height="16" fill="url(#pg)"/><path d="M4 8h16M4 16h16M8 4v16M16 4v16" stroke="#e6e6f6" stroke-width=".7"/><path d="M4 6h16M4 10h16M4 14h16M4 18h16M6 4v16M10 4v16M14 4v16M18 4v16" stroke="#8e8ac6" stroke-width=".45"/><path d="M12 1.7v20.6M1.7 12h20.6" stroke="#33333c" stroke-width=".6"/><path d="M12 1.2l-1.1 1.7h2.2zM12 22.8l-1.1-1.7h2.2zM1.2 12l1.7-1.1v2.2zM22.8 12l-1.7-1.1v2.2z" fill="#222"/></svg><i style="left:13px;top:237.5px;width:112px;height:1px;background:#c8c8c8"></i><i style="left:14px;top:244.7px;width:111px;height:16.5px;background:#e1e1e1;border:1px solid #6fa3d8"></i><span style="left:14px;top:248px;font-size:9.5px;line-height:11px;width:111px;text-align:center;display:block">应用到再制</span><i style="left:14px;top:264.5px;width:111px;height:16.5px;background:#e1e1e1;border:1px solid #8fb4dc"></i><span style="left:14px;top:267.5px;font-size:9.5px;line-height:11px;width:111px;text-align:center;display:block">应用</span></div>
<div id="palette" class="abs"><i style="left:0px;top:0px;width:16px;height:36px;background:#f8f8f8"></i><span style="left:4.5px;top:-1px;font-size:6px;line-height:6px;color:#b0b0b0">...</span><i style="left:2.5px;top:10.3px;width:11.4px;height:11.4px;background:linear-gradient(#fff,#e4e4e4);border:1px solid #c4c4c4;border-radius:50%"></i><svg style="left:6.4px;top:13.5px" width="5" height="5" viewBox="0 0 5 5"><path d="M.5 0v5L4.5 2.5z" fill="#111"/></svg><svg style="left:4.7px;top:28.6px" width="7" height="4" viewBox="0 0 7 4"><path d="M.4 3.8l3.1-3.2 3.1 3.2" fill="none" stroke="#aeaeae" stroke-width="1.1"/></svg><i style="left:1px;top:36px;width:14px;height:13.37px;background:#fff;border:1px solid #333"></i><svg style="left:1px;top:36px" width="14" height="13.4" viewBox="0 0 14 13.4"><path d="M0.5 .5l13 12.4M13.5 .5l-13 12.4" stroke="#222" stroke-width="1"/></svg><i style="left:1px;top:49.37px;width:14px;height:13.67px;background:#231f20"></i><i style="left:1px;top:62.739999999999995px;width:14px;height:13.67px;background:#3b3838"></i><i style="left:1px;top:76.11px;width:14px;height:13.67px;background:#4f4d4d"></i><i style="left:1px;top:89.47999999999999px;width:14px;height:13.67px;background:#626060"></i><i style="left:1px;top:102.85px;width:14px;height:13.67px;background:#767575"></i><i style="left:1px;top:116.22px;width:14px;height:13.67px;background:#8b8a8a"></i><i style="left:1px;top:129.58999999999997px;width:14px;height:13.67px;background:#9f9e9e"></i><i style="left:1px;top:142.95999999999998px;width:14px;height:13.67px;background:#b3b3b3"></i><i style="left:1px;top:156.32999999999998px;width:14px;height:13.67px;background:#c9c9c9"></i><i style="left:1px;top:169.7px;width:14px;height:13.67px;background:#dedede"></i><i style="left:1px;top:183.07px;width:14px;height:13.67px;background:#ffffff"></i><i style="left:1px;top:196.44px;width:14px;height:13.67px;background:#2e0f8a"></i><i style="left:1px;top:209.81px;width:14px;height:13.67px;background:#0090e8"></i><i style="left:1px;top:223.17999999999998px;width:14px;height:13.67px;background:#009a49"></i><i style="left:1px;top:236.54999999999998px;width:14px;height:13.67px;background:#ffff00"></i><i style="left:1px;top:249.92px;width:14px;height:13.569999999999999px;background:#fff"></i><i style="left:1.5px;top:250.42px;width:13px;height:12.37px;background:#ee3e02;border:1px solid #3a2a20"></i><i style="left:1px;top:263.28999999999996px;width:14px;height:13.67px;background:#ee2a7b"></i><i style="left:1px;top:276.65999999999997px;width:14px;height:13.67px;background:#a3417c"></i><i style="left:1px;top:290.03px;width:14px;height:13.67px;background:#f58400"></i><i style="left:1px;top:303.4px;width:14px;height:13.67px;background:#f8a1a1"></i><i style="left:1px;top:316.77px;width:14px;height:13.67px;background:#77685f"></i><i style="left:1px;top:330.14px;width:14px;height:13.67px;background:#c1b2e0"></i><i style="left:1px;top:343.51px;width:14px;height:13.67px;background:#a28bc8"></i><i style="left:1px;top:356.88px;width:14px;height:13.67px;background:#6280c8"></i><i style="left:1px;top:370.25px;width:14px;height:13.67px;background:#7a62b0"></i><i style="left:1px;top:383.62px;width:14px;height:13.67px;background:#716998"></i><i style="left:1px;top:396.98999999999995px;width:14px;height:13.67px;background:#485a82"></i><i style="left:1px;top:410.35999999999996px;width:14px;height:13.67px;background:#514a6a"></i><i style="left:1px;top:423.72999999999996px;width:14px;height:13.67px;background:#61718a"></i><i style="left:1px;top:437.09999999999997px;width:14px;height:13.67px;background:#0f78c8"></i><i style="left:1px;top:450.46999999999997px;width:14px;height:13.67px;background:#62b8f0"></i></div>
<svg class="abs" style="left:0;top:0" width="1000" height="546" viewBox="0 0 1000 546"><rect x="457.5" y="381.3" width="82.4" height="115" fill="#b2b2b2"/><rect x="453.5" y="378.5" width="81.5" height="114" fill="#fff" stroke="#a0a0a0" stroke-width="1"/><ellipse cx="253" cy="304.2" rx="108.6" ry="32.6" transform="rotate(-50.6 253 304.2)" fill="#ee3e02" stroke="#7a4a3a" stroke-width=".8"/><ellipse cx="257.9" cy="307.5" rx="109.3" ry="32.6" transform="rotate(61.5 257.9 307.5)" fill="#ffff00" stroke="#6a6a3a" stroke-width=".8"/><rect x="204.2" y="209.7" width="2.6" height="2.4" fill="#8088a0" stroke="#3a4058" stroke-width=".6"/><rect x="319.7" y="218.4" width="2.6" height="2.4" fill="#50607a" stroke="#2a3a4a" stroke-width=".6"/></svg>
<div class="abs" style="left:0;top:0"><i style="left:7.6px;top:82px;width:79.2px;height:133.8px;background:#fff;border:1px solid #828790;border-top:0"></i><span style="left:10.3px;top:82.5px;font-size:10.2px;line-height:11px;letter-spacing:-1.3px;word-spacing:2px">推拉 1</span><span style="left:10.3px;top:92.63px;font-size:10.2px;line-height:11px;letter-spacing:-1.3px;word-spacing:2px">推拉 2</span><span style="left:10.3px;top:102.76px;font-size:10.2px;line-height:11px;letter-spacing:-1.3px;word-spacing:2px">推拉 3</span><span style="left:10.3px;top:112.89px;font-size:10.2px;line-height:11px;letter-spacing:-1.3px;word-spacing:2px">推拉 4</span><span style="left:10.3px;top:123.02px;font-size:10.2px;line-height:11px;letter-spacing:-1.3px;word-spacing:2px">推拉 5</span><span style="left:10.3px;top:133.15000000000003px;font-size:10.2px;line-height:11px;letter-spacing:-1.3px;word-spacing:2px">推拉 6</span><i style="left:8.6px;top:143.98000000000002px;width:77.2px;height:10px;background:#3399ff"></i><span style="left:10.3px;top:143.28000000000003px;font-size:10.2px;line-height:11px;color:#fff;letter-spacing:-1.3px;word-spacing:2px">扭曲 1</span><span style="left:10.3px;top:153.41000000000003px;font-size:10.2px;line-height:11px;letter-spacing:-1.3px;word-spacing:2px">扭曲 2</span><span style="left:10.3px;top:163.54000000000002px;font-size:10.2px;line-height:11px;letter-spacing:-1.3px;word-spacing:2px">扭曲 3</span><span style="left:10.3px;top:173.67000000000002px;font-size:10.2px;line-height:11px;letter-spacing:-1.3px;word-spacing:2px">压缩器 1</span><span style="left:10.3px;top:183.8px;font-size:10.2px;line-height:11px;letter-spacing:-1.3px;word-spacing:2px">压缩器 2</span><span style="left:10.3px;top:193.93px;font-size:10.2px;line-height:11px;letter-spacing:-1.3px;word-spacing:2px">压缩器 3</span><span style="left:10.3px;top:204.06px;font-size:10.2px;line-height:11px;letter-spacing:-1.3px;word-spacing:2px">压缩器 4</span><i style="left:89.5px;top:145px;width:78.5px;height:78.5px;background:#8a8a8a"></i><i style="left:87.5px;top:143px;width:78.5px;height:78.5px;background:#fff;border:1px solid #8c8c8c"></i></div>
<svg class="abs" style="left:0;top:0" width="1000" height="546" viewBox="0 0 1000 546"><circle cx="126.8" cy="182.7" r="38.3" fill="#e2410c"/><path d="M126.2 185.8 L126.4 186 L126.6 186.2 L126.9 186.4 L127.2 186.6 L127.5 186.7 L127.8 186.8 L128.1 186.9 L128.5 187 L128.8 187 L129.2 187 L129.6 186.9 L130 186.9 L130.4 186.8 L130.8 186.6 L131.2 186.4 L131.6 186.2 L132 186" fill="none" stroke="#fff" stroke-width="2.81" stroke-linecap="round"/><path d="M132 186 L132.3 185.7 L132.7 185.4 L133 185 L133.3 184.6 L133.6 184.2 L133.9 183.7 L134.1 183.3 L134.3 182.8 L134.4 182.2 L134.6 181.7 L134.6 181.1 L134.7 180.5 L134.7 179.9 L134.6 179.3 L134.5 178.7 L134.3 178.1 L134.1 177.4" fill="none" stroke="#fff" stroke-width="2.56" stroke-linecap="round"/><path d="M134.1 177.4 L133.9 176.8 L133.6 176.2 L133.2 175.7 L132.8 175.1 L132.4 174.5 L131.9 174 L131.3 173.5 L130.8 173.1 L130.1 172.7 L129.5 172.3 L128.8 172 L128 171.7 L127.3 171.5 L126.5 171.3 L125.7 171.2 L124.8 171.1 L124 171.1" fill="none" stroke="#fff" stroke-width="2.32" stroke-linecap="round"/><path d="M124 171.1 L123.1 171.2 L122.3 171.3 L121.4 171.5 L120.5 171.7 L119.7 172.1 L118.9 172.4 L118.1 172.9 L117.3 173.4 L116.5 174 L115.8 174.6 L115.1 175.3 L114.5 176.1 L113.9 176.9 L113.4 177.7 L112.9 178.6 L112.5 179.6 L112.1 180.6" fill="none" stroke="#fff" stroke-width="2.07" stroke-linecap="round"/><path d="M112.1 180.6 L111.8 181.6 L111.6 182.6 L111.5 183.7 L111.4 184.8 L111.4 185.9 L111.5 187 L111.7 188.1 L112 189.2 L112.3 190.3 L112.7 191.4 L113.2 192.5 L113.8 193.5 L114.5 194.5 L115.2 195.5 L116 196.4 L116.9 197.3 L117.9 198.1" fill="none" stroke="#fff" stroke-width="1.82" stroke-linecap="round"/><path d="M117.9 198.1 L118.9 198.8 L120 199.5 L121.1 200.1 L122.3 200.6 L123.5 201 L124.8 201.4 L126.1 201.6 L127.4 201.8 L128.8 201.9 L130.1 201.9 L131.5 201.8 L132.9 201.6 L134.3 201.2 L135.6 200.8 L136.9 200.3 L138.2 199.7 L139.5 199" fill="none" stroke="#fff" stroke-width="1.57" stroke-linecap="round"/><path d="M139.5 199 L140.7 198.2 L141.9 197.3 L143 196.3 L144.1 195.3 L145 194.1 L145.9 192.9 L146.8 191.6 L147.5 190.3 L148.1 188.8 L148.7 187.4 L149.1 185.9 L149.5 184.3 L149.7 182.7 L149.8 181.1 L149.8 179.5 L149.7 177.8 L149.5 176.2" fill="none" stroke="#fff" stroke-width="1.33" stroke-linecap="round"/><path d="M149.5 176.2 L149.1 174.6 L148.7 173 L148.1 171.4 L147.4 169.8 L146.6 168.3 L145.7 166.9 L144.6 165.5 L143.5 164.2 L142.3 162.9 L140.9 161.7 L139.5 160.6 L138 159.6 L136.5 158.8 L134.8 158 L133.1 157.3 L131.3 156.8 L129.5 156.3" fill="none" stroke="#fff" stroke-width="1.08" stroke-linecap="round"/><path d="M129.5 156.3 L127.7 156 L125.8 155.9 L123.9 155.8 L122 155.9 L120.1 156.2 L118.3 156.5 L116.4 157 L114.5 157.7 L112.7 158.4 L111 159.3 L109.3 160.4 L107.7 161.5 L106.1 162.8 L104.6 164.2 L103.3 165.7 L102 167.3 L100.8 169" fill="none" stroke="#fff" stroke-width="1.05" stroke-linecap="round"/><path d="M100.8 169 L99.8 170.7 L98.8 172.6 L98 174.5 L97.3 176.5 L96.8 178.6 L96.4 180.7 L96.2 182.8 L96.1 184.9 L96.2 187.1 L96.4 189.3 L96.7 191.4 L97.3 193.6 L97.9 195.7 L98.8 197.7 L99.7 199.7 L100.9 201.7 L102.1 203.6" fill="none" stroke="#fff" stroke-width="1.05" stroke-linecap="round"/><path d="M102.1 203.6 L103.5 205.4 L105 207.1 L106.7 208.6 L108.4 210.1 L110.3 211.5 L112.3 212.7 L114.4 213.8 L116.5 214.8 L118.7 215.6 L121 216.2 L123.4 216.7 L125.7 217.1 L128.2 217.2 L130.6 217.2 L133 217 L135.4 216.7 L137.8 216.2" fill="none" stroke="#fff" stroke-width="1.05" stroke-linecap="round"/><path d="M137.8 216.2 L140.2 215.5 L142.6 214.6 L144.8 213.6 L147 212.4 L149.2 211 L151.2 209.5 L153.1 207.9 L155 206.1 L156.7 204.2 L158.2 202.1 L159.7 199.9 L160.9 197.7 L162.1 195.3 L163 192.9 L163.8 190.3 L164.4 187.8 L164.9 185.1 L165.1 182.5 L165.2 179.8 L165 177.1 L164.7 174.4 L164.2 171.7" fill="none" stroke="#fff" stroke-width="1.05" stroke-linecap="round"/><path d="M126.9 179.1 L126.6 178.9 L126.3 178.8 L126 178.7 L125.7 178.6 L125.4 178.5 L125 178.4 L124.6 178.4 L124.2 178.4 L123.8 178.5 L123.5 178.6 L123.1 178.7 L122.7 178.8 L122.3 179 L121.9 179.3 L121.5 179.5 L121.1 179.8 L120.8 180.2" fill="none" stroke="#fff" stroke-width="2.78" stroke-linecap="round"/><path d="M120.8 180.2 L120.5 180.5 L120.2 180.9 L119.9 181.4 L119.6 181.8 L119.4 182.3 L119.2 182.9 L119.1 183.4 L119 184 L118.9 184.6 L118.9 185.1 L119 185.8 L119 186.4 L119.2 187 L119.3 187.6 L119.6 188.2 L119.8 188.8 L120.2 189.4" fill="none" stroke="#fff" stroke-width="2.53" stroke-linecap="round"/><path d="M120.2 189.4 L120.5 190 L121 190.6 L121.4 191.1 L122 191.6 L122.5 192.1 L123.1 192.5 L123.8 192.9 L124.5 193.3 L125.2 193.6 L125.9 193.8 L126.7 194 L127.5 194.2 L128.4 194.3 L129.2 194.3 L130 194.3 L130.9 194.2 L131.8 194" fill="none" stroke="#fff" stroke-width="2.28" stroke-linecap="round"/><path d="M131.8 194 L132.6 193.8 L133.5 193.5 L134.3 193.2 L135.1 192.7 L136 192.2 L136.7 191.7 L137.5 191.1 L138.2 190.4 L138.8 189.7 L139.4 188.9 L140 188.1 L140.5 187.2 L141 186.2 L141.3 185.3 L141.7 184.3 L141.9 183.2 L142.1 182.2" fill="none" stroke="#fff" stroke-width="2.03" stroke-linecap="round"/><path d="M142.1 182.2 L142.2 181.1 L142.2 180 L142.1 178.9 L142 177.7 L141.8 176.6 L141.5 175.5 L141.1 174.4 L140.6 173.4 L140 172.3 L139.4 171.3 L138.7 170.3 L137.9 169.4 L137 168.5 L136.1 167.7 L135.1 166.9 L134.1 166.2 L132.9 165.6" fill="none" stroke="#fff" stroke-width="1.78" stroke-linecap="round"/><path d="M132.9 165.6 L131.8 165 L130.6 164.5 L129.3 164.1 L128 163.8 L126.7 163.6 L125.3 163.5 L124 163.5 L122.6 163.6 L121.2 163.8 L119.8 164 L118.5 164.4 L117.1 164.9 L115.8 165.5 L114.5 166.1 L113.3 166.9 L112.1 167.8 L111 168.7" fill="none" stroke="#fff" stroke-width="1.54" stroke-linecap="round"/><path d="M111 168.7 L109.9 169.8 L108.9 170.9 L107.9 172.1 L107.1 173.4 L106.3 174.7 L105.6 176.1 L105.1 177.6 L104.6 179.1 L104.2 180.6 L104 182.2 L103.8 183.8 L103.8 185.4 L103.9 187.1 L104 188.7 L104.4 190.4 L104.8 192 L105.3 193.6" fill="none" stroke="#fff" stroke-width="1.29" stroke-linecap="round"/><path d="M105.3 193.6 L106 195.1 L106.8 196.7 L107.7 198.1 L108.7 199.6 L109.8 200.9 L111 202.2 L112.3 203.4 L113.7 204.5 L115.2 205.5 L116.7 206.4 L118.4 207.2 L120.1 207.9 L121.8 208.5 L123.6 209 L125.5 209.3 L127.3 209.5 L129.2 209.6" fill="none" stroke="#fff" stroke-width="1.05" stroke-linecap="round"/><path d="M129.2 209.6 L131.1 209.5 L133 209.3 L134.9 209 L136.8 208.5 L138.7 207.9 L140.5 207.1 L142.3 206.3 L144 205.2 L145.6 204.1 L147.2 202.9 L148.7 201.5 L150.1 200 L151.4 198.4 L152.6 196.8 L153.7 195 L154.6 193.1 L155.5 191.2" fill="none" stroke="#fff" stroke-width="1.05" stroke-linecap="round"/><path d="M155.5 191.2 L156.1 189.2 L156.7 187.2 L157.1 185.1 L157.4 183 L157.5 180.8 L157.5 178.6 L157.3 176.5 L156.9 174.3 L156.4 172.1 L155.8 170 L155 168 L154 165.9 L152.9 164 L151.7 162.1 L150.3 160.3 L148.8 158.5 L147.1 156.9" fill="none" stroke="#fff" stroke-width="1.05" stroke-linecap="round"/><path d="M147.1 156.9 L145.4 155.4 L143.5 154 L141.5 152.8 L139.4 151.7 L137.3 150.7 L135.1 149.9 L132.8 149.2 L130.4 148.7 L128.1 148.4 L125.6 148.2 L123.2 148.2 L120.8 148.3 L118.3 148.7 L115.9 149.2 L113.5 149.9 L111.2 150.7 L108.9 151.8" fill="none" stroke="#fff" stroke-width="1.05" stroke-linecap="round"/><path d="M108.9 151.8 L106.7 153 L104.6 154.3 L102.5 155.8 L100.6 157.4 L98.7 159.2 L97 161.2 L95.4 163.2 L94 165.4 L92.7 167.7 L91.6 170 L90.6 172.5 L89.8 175 L89.2 177.6 L88.7 180.2 L88.5 182.9 L88.4 185.6 L88.6 188.3 L88.9 191 L89.4 193.7" fill="none" stroke="#fff" stroke-width="1.05" stroke-linecap="round"/><path d="M116.6 190.8 L117.1 191.6 L117.6 192.4 L118.2 193.2 L118.9 193.9 L119.6 194.5 L120.4 195.2 L121.2 195.8 L122.1 196.3 L123 196.7 L123.9 197.1 L124.9 197.5 L126 197.7" fill="none" stroke="#fff" stroke-width="0.6" stroke-linecap="round" stroke-dasharray="5 2 8 1.5 3 2"/><path d="M126 197.7 L127 197.9 L128.1 198.1 L129.2 198.1 L130.3 198.1 L131.5 197.9 L132.6 197.7 L133.7 197.4 L134.8 197.1 L135.9 196.6 L136.9 196.1 L138 195.5 L139 194.8" fill="none" stroke="#fff" stroke-width="0.6" stroke-linecap="round" stroke-dasharray="5 2 8 1.5 3 2"/><path d="M139 194.8 L139.9 194 L140.8 193.2 L141.6 192.2 L142.4 191.3 L143.1 190.2 L143.8 189.1 L144.4 188 L144.9 186.7 L145.3 185.5 L145.6 184.2 L145.8 182.9 L146 181.5" fill="none" stroke="#fff" stroke-width="0.6" stroke-linecap="round" stroke-dasharray="5 2 8 1.5 3 2"/><path d="M146 181.5 L146 180.2 L145.9 178.8 L145.8 177.4 L145.5 176 L145.2 174.7 L144.7 173.3 L144.2 172 L143.5 170.7 L142.8 169.4 L141.9 168.2 L141 167.1 L140 166" fill="none" stroke="#fff" stroke-width="0.6" stroke-linecap="round" stroke-dasharray="5 2 8 1.5 3 2"/><path d="M140 166 L138.8 165 L137.7 164 L136.4 163.1 L135.1 162.4 L133.7 161.7 L132.2 161.1 L130.7 160.6 L129.2 160.2 L127.6 159.9 L126 159.7 L124.4 159.7 L122.7 159.7" fill="none" stroke="#fff" stroke-width="0.6" stroke-linecap="round" stroke-dasharray="5 2 8 1.5 3 2"/><path d="M122.7 159.7 L121.1 159.9 L119.4 160.2 L117.8 160.6 L116.2 161.1 L114.6 161.8 L113.1 162.6 L111.6 163.4 L110.2 164.4 L108.8 165.5 L107.5 166.7 L106.3 168 L105.2 169.4" fill="none" stroke="#fff" stroke-width="0.6" stroke-linecap="round" stroke-dasharray="5 2 8 1.5 3 2"/><path d="M105.2 169.4 L104.1 170.9 L103.2 172.4 L102.4 174 L101.7 175.7 L101.1 177.5 L100.6 179.3 L100.2 181.1 L100 183 L99.9 184.9 L100 186.8 L100.2 188.7 L100.5 190.6" fill="none" stroke="#fff" stroke-width="0.6" stroke-linecap="round" stroke-dasharray="5 2 8 1.5 3 2"/><path d="M100.5 190.6 L100.9 192.5 L101.5 194.3 L102.3 196.2 L103.1 197.9 L104.1 199.7 L105.2 201.3 L106.5 202.9 L107.8 204.4 L109.3 205.8 L110.9 207.2 L112.5 208.4 L114.3 209.5" fill="none" stroke="#fff" stroke-width="0.6" stroke-linecap="round" stroke-dasharray="5 2 8 1.5 3 2"/><path d="M114.3 209.5 L116.2 210.4 L118.1 211.3 L120.1 212 L122.1 212.6 L124.2 213 L126.3 213.3 L128.5 213.4 L130.7 213.4 L132.8 213.2 L135 212.9 L137.2 212.4 L139.3 211.7" fill="none" stroke="#fff" stroke-width="0.6" stroke-linecap="round" stroke-dasharray="5 2 8 1.5 3 2"/><path d="M139.3 211.7 L141.4 210.9 L143.4 210 L145.4 208.9 L147.3 207.7 L149.1 206.3 L150.8 204.8 L152.5 203.1 L154 201.4 L155.4 199.5 L156.6 197.5 L157.8 195.5 L158.7 193.3" fill="none" stroke="#fff" stroke-width="0.6" stroke-linecap="round" stroke-dasharray="5 2 8 1.5 3 2"/><path d="M158.7 193.3 L159.6 191.1 L160.3 188.8 L160.8 186.5 L161.1 184.1 L161.3 181.7 L161.3 179.2 L161.2 176.8 L160.8 174.4 L160.3 171.9 L159.6 169.5 L158.8 167.2 L157.8 164.9" fill="none" stroke="#fff" stroke-width="0.6" stroke-linecap="round" stroke-dasharray="5 2 8 1.5 3 2"/><path d="M157.8 164.9 L156.6 162.7 L155.3 160.5 L153.8 158.5 L152.1 156.5 L150.3 154.7 L148.4 152.9 L146.3 151.4 L144.2 149.9 L141.9 148.6 L139.5 147.5 L137.1 146.5 L134.5 145.7 L131.9 145.1 L129.3 144.6 L126.6 144.4 L123.9 144.3 L121.2 144.5 L118.5 144.8 L115.8 145.3" fill="none" stroke="#fff" stroke-width="0.6" stroke-linecap="round" stroke-dasharray="5 2 8 1.5 3 2"/><path d="M121.7 167.5 L120.6 167.8 L119.4 168.1 L118.4 168.5 L117.3 169 L116.2 169.6 L115.2 170.2 L114.3 170.9 L113.3 171.7 L112.5 172.6 L111.6 173.5 L110.9 174.5" fill="none" stroke="#fff" stroke-width="0.6" stroke-linecap="round" stroke-dasharray="7 1.5 4 2 9 2"/><path d="M110.9 174.5 L110.2 175.6 L109.6 176.7 L109 177.9 L108.6 179.1 L108.2 180.4 L107.9 181.7 L107.7 183 L107.6 184.4 L107.6 185.7 L107.7 187.1 L107.9 188.5" fill="none" stroke="#fff" stroke-width="0.6" stroke-linecap="round" stroke-dasharray="7 1.5 4 2 9 2"/><path d="M107.9 188.5 L108.2 189.8 L108.6 191.2 L109.1 192.5 L109.6 193.9 L110.3 195.1 L111.1 196.4 L112 197.5 L112.9 198.7 L114 199.7 L115.1 200.7 L116.3 201.7" fill="none" stroke="#fff" stroke-width="0.6" stroke-linecap="round" stroke-dasharray="7 1.5 4 2 9 2"/><path d="M116.3 201.7 L117.6 202.5 L119 203.3 L120.4 203.9 L121.8 204.5 L123.3 205 L124.9 205.3 L126.5 205.6 L128.1 205.7 L129.7 205.7 L131.4 205.6 L133 205.4" fill="none" stroke="#fff" stroke-width="0.6" stroke-linecap="round" stroke-dasharray="7 1.5 4 2 9 2"/><path d="M133 205.4 L134.6 205.1 L136.2 204.7 L137.8 204.1 L139.4 203.4 L140.9 202.6 L142.4 201.7 L143.8 200.7 L145.1 199.6 L146.4 198.4 L147.6 197.1 L148.7 195.7" fill="none" stroke="#fff" stroke-width="0.6" stroke-linecap="round" stroke-dasharray="7 1.5 4 2 9 2"/><path d="M148.7 195.7 L149.7 194.2 L150.6 192.6 L151.4 191 L152.1 189.3 L152.7 187.5 L153.1 185.7 L153.4 183.9 L153.6 182 L153.7 180.1 L153.6 178.2 L153.4 176.3" fill="none" stroke="#fff" stroke-width="0.6" stroke-linecap="round" stroke-dasharray="7 1.5 4 2 9 2"/><path d="M153.4 176.3 L153 174.4 L152.5 172.5 L151.9 170.7 L151.2 168.9 L150.3 167.1 L149.3 165.4 L148.1 163.8 L146.9 162.2 L145.5 160.7 L144 159.3 L142.4 158" fill="none" stroke="#fff" stroke-width="0.6" stroke-linecap="round" stroke-dasharray="7 1.5 4 2 9 2"/><path d="M142.4 158 L140.7 156.8 L139 155.8 L137.1 154.8 L135.2 154 L133.2 153.3 L131.2 152.8 L129.1 152.4 L126.9 152.1 L124.8 152 L122.6 152.1 L120.4 152.3" fill="none" stroke="#fff" stroke-width="0.6" stroke-linecap="round" stroke-dasharray="7 1.5 4 2 9 2"/><path d="M120.4 152.3 L118.3 152.6 L116.1 153.1 L114 153.8 L112 154.6 L109.9 155.6 L108 156.7 L106.1 157.9 L104.3 159.3 L102.6 160.8 L101 162.5 L99.5 164.2" fill="none" stroke="#fff" stroke-width="0.6" stroke-linecap="round" stroke-dasharray="7 1.5 4 2 9 2"/><path d="M99.5 164.2 L98.1 166.1 L96.8 168.1 L95.7 170.1 L94.8 172.3 L94 174.5 L93.3 176.8 L92.8 179.1 L92.5 181.5 L92.3 183.9 L92.3 186.4 L92.5 188.8" fill="none" stroke="#fff" stroke-width="0.6" stroke-linecap="round" stroke-dasharray="7 1.5 4 2 9 2"/><path d="M92.5 188.8 L92.8 191.2 L93.3 193.6 L94 196 L94.9 198.4 L95.9 200.6 L97.1 202.9 L98.4 205 L99.9 207 L101.6 209 L103.4 210.8 L105.3 212.5" fill="none" stroke="#fff" stroke-width="0.6" stroke-linecap="round" stroke-dasharray="7 1.5 4 2 9 2"/><path d="M105.3 212.5 L107.3 214.1 L109.5 215.5 L111.8 216.8 L114.1 218 L116.6 218.9 L119.1 219.7 L121.7 220.3 L124.3 220.8 L127 221 L129.7 221.1 L132.4 220.9 L135.1 220.6 L137.8 220.1" fill="none" stroke="#fff" stroke-width="0.6" stroke-linecap="round" stroke-dasharray="7 1.5 4 2 9 2"/><path d="M134.7 160 L133.2 159.4 L131.5 158.8 L129.9 158.4 L128.2 158 L126.4 157.8 L124.7 157.8 L122.9 157.8" fill="none" stroke="#fff" stroke-width="0.45" stroke-linecap="round" stroke-dasharray="4 2 6 3"/><path d="M122.9 157.8 L121.1 158 L119.3 158.3 L117.6 158.7 L115.8 159.2 L114.1 159.9 L112.5 160.7 L110.9 161.6" fill="none" stroke="#fff" stroke-width="0.45" stroke-linecap="round" stroke-dasharray="4 2 6 3"/><path d="M110.9 161.6 L109.3 162.7 L107.8 163.8 L106.4 165.1 L105.1 166.5 L103.8 168 L102.7 169.5 L101.7 171.2" fill="none" stroke="#fff" stroke-width="0.45" stroke-linecap="round" stroke-dasharray="4 2 6 3"/><path d="M101.7 171.2 L100.8 172.9 L100 174.7 L99.3 176.6 L98.8 178.5 L98.4 180.5 L98.1 182.5 L98 184.5" fill="none" stroke="#fff" stroke-width="0.45" stroke-linecap="round" stroke-dasharray="4 2 6 3"/><path d="M98 184.5 L98.1 186.5 L98.2 188.6 L98.5 190.6 L99 192.6 L99.6 194.6 L100.4 196.6 L101.3 198.5" fill="none" stroke="#fff" stroke-width="0.45" stroke-linecap="round" stroke-dasharray="4 2 6 3"/><path d="M101.3 198.5 L102.3 200.4 L103.5 202.2 L104.8 203.9 L106.2 205.5 L107.7 207 L109.4 208.4 L111.2 209.8" fill="none" stroke="#fff" stroke-width="0.45" stroke-linecap="round" stroke-dasharray="4 2 6 3"/><path d="M111.2 209.8 L113 210.9 L115 212 L117 212.9 L119.1 213.7 L121.3 214.3 L123.5 214.8 L125.8 215.1" fill="none" stroke="#fff" stroke-width="0.45" stroke-linecap="round" stroke-dasharray="4 2 6 3"/><path d="M125.8 215.1 L128.1 215.3 L130.4 215.3 L132.7 215.1 L135 214.8 L137.3 214.3 L139.6 213.7 L141.8 212.8" fill="none" stroke="#fff" stroke-width="0.45" stroke-linecap="round" stroke-dasharray="4 2 6 3"/><path d="M141.8 212.8 L143.9 211.9 L146 210.7 L148.1 209.4 L150 208 L151.9 206.4 L153.6 204.7 L155.2 202.9" fill="none" stroke="#fff" stroke-width="0.45" stroke-linecap="round" stroke-dasharray="4 2 6 3"/><path d="M155.2 202.9 L156.7 200.9 L158.1 198.9 L159.3 196.7 L160.4 194.4 L161.3 192.1 L162 189.7 L162.6 187.2" fill="none" stroke="#fff" stroke-width="0.45" stroke-linecap="round" stroke-dasharray="4 2 6 3"/><path d="M162.6 187.2 L163 184.7 L163.2 182.1 L163.3 179.6 L163.1 177 L162.8 174.4 L162.3 171.8 L161.6 169.3" fill="none" stroke="#fff" stroke-width="0.45" stroke-linecap="round" stroke-dasharray="4 2 6 3"/><path d="M161.6 169.3 L160.7 166.8 L159.7 164.4 L158.4 162 L157 159.8 L155.5 157.6 L153.8 155.5 L151.9 153.5 L149.9 151.7 L147.8 150 L145.5 148.5" fill="none" stroke="#fff" stroke-width="0.45" stroke-linecap="round" stroke-dasharray="4 2 6 3"/><path d="M138.8 205.8 L140.5 205 L142.1 204.1 L143.7 203.1 L145.2 202 L146.7 200.8 L148 199.4" fill="none" stroke="#fff" stroke-width="0.45" stroke-linecap="round" stroke-dasharray="6 3 3 2"/><path d="M148 199.4 L149.3 198 L150.5 196.4 L151.6 194.8 L152.5 193.1 L153.3 191.3 L154.1 189.4" fill="none" stroke="#fff" stroke-width="0.45" stroke-linecap="round" stroke-dasharray="6 3 3 2"/><path d="M154.1 189.4 L154.6 187.5 L155.1 185.6 L155.4 183.6 L155.6 181.5 L155.6 179.5 L155.4 177.4" fill="none" stroke="#fff" stroke-width="0.45" stroke-linecap="round" stroke-dasharray="6 3 3 2"/><path d="M155.4 177.4 L155.2 175.4 L154.7 173.3 L154.2 171.3 L153.5 169.3 L152.6 167.4 L151.6 165.5" fill="none" stroke="#fff" stroke-width="0.45" stroke-linecap="round" stroke-dasharray="6 3 3 2"/><path d="M151.6 165.5 L150.5 163.7 L149.2 162 L147.8 160.3 L146.2 158.7 L144.6 157.3 L142.9 155.9" fill="none" stroke="#fff" stroke-width="0.45" stroke-linecap="round" stroke-dasharray="6 3 3 2"/><path d="M142.9 155.9 L141 154.7 L139.1 153.6 L137 152.7 L134.9 151.9 L132.8 151.2 L130.5 150.7" fill="none" stroke="#fff" stroke-width="0.45" stroke-linecap="round" stroke-dasharray="6 3 3 2"/><path d="M130.5 150.7 L128.3 150.3 L126 150.1 L123.7 150.1 L121.3 150.2 L119 150.5 L116.7 151" fill="none" stroke="#fff" stroke-width="0.45" stroke-linecap="round" stroke-dasharray="6 3 3 2"/><path d="M116.7 151 L114.4 151.6 L112.2 152.4 L110 153.4 L107.9 154.5 L105.8 155.8 L103.9 157.2" fill="none" stroke="#fff" stroke-width="0.45" stroke-linecap="round" stroke-dasharray="6 3 3 2"/><path d="M103.9 157.2 L102 158.7 L100.2 160.4 L98.6 162.3 L97.1 164.2 L95.7 166.3 L94.4 168.5" fill="none" stroke="#fff" stroke-width="0.45" stroke-linecap="round" stroke-dasharray="6 3 3 2"/><path d="M94.4 168.5 L93.3 170.7 L92.4 173.1 L91.6 175.5 L91.1 178 L90.6 180.5 L90.4 183.1" fill="none" stroke="#fff" stroke-width="0.45" stroke-linecap="round" stroke-dasharray="6 3 3 2"/><path d="M90.4 183.1 L90.3 185.7 L90.5 188.3 L90.8 190.8 L91.3 193.4 L92 196 L92.8 198.5" fill="none" stroke="#fff" stroke-width="0.45" stroke-linecap="round" stroke-dasharray="6 3 3 2"/><path d="M92.8 198.5 L93.9 200.9 L95.1 203.3 L96.5 205.6 L98.1 207.8 L99.8 209.9 L101.7 211.8 L103.7 213.7 L105.8 215.4 L108.1 216.9" fill="none" stroke="#fff" stroke-width="0.45" stroke-linecap="round" stroke-dasharray="6 3 3 2"/><polygon points="77.7,70.8 95.3,74.4 93.4,77.4 110,87.8 131.5,104.2 150,118 200,153.8 233,176.5 255,192.5 270.3,203.6 270.8,204.2 255,194 233,179 200,158 175,141.2 146.4,122.5 117,104.2 99.7,92 89,84 85.9,86.5" fill="#fb3030"/><polygon points="29.6,150.2 41.1,163.2 37,165 37.6,168 46.7,197 54.8,225 63.1,253 71.8,281 78.4,302.9 83.8,325 76.5,302.9 68.6,281 58.8,253 49,225 39.1,197 29.3,168 28.5,167.3 26,165.6" fill="#fb3030"/></svg>
</body>
</html>
